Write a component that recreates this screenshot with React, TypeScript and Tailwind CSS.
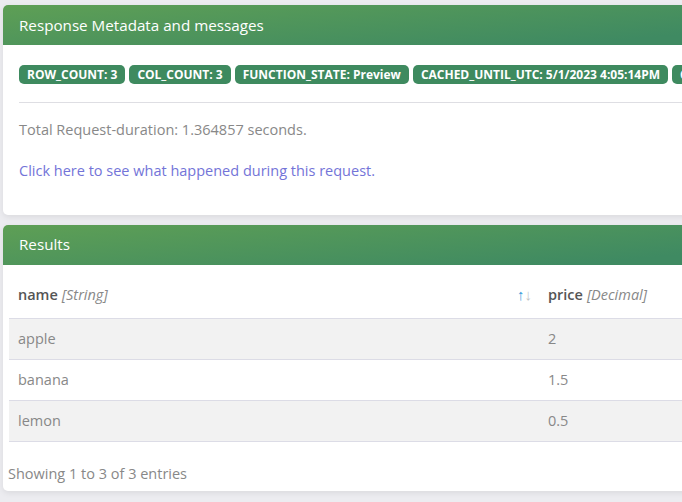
import { ReactNode } from "react";

const badges = [
    "ROW_COUNT: 3",
    "COL_COUNT: 3",
    "FUNCTION_STATE: Preview",
    "CACHED_UNTIL_UTC: 5/1/2023 4:05:14PM",
    "CACHE_HIT: False",
];

const rows = [
    { name: "apple", price: "2" },
    { name: "banana", price: "1.5" },
    { name: "lemon", price: "0.5" },
];

function CardHeader({ children }: { children: ReactNode }) {
    return (
        <div className="h-10 flex items-center px-4 text-[15.2px] text-white rounded-tl-[5px] bg-[linear-gradient(175deg,#5e9f55_0%,#3f8a62_75%)]">
            {children}
        </div>
    );
}

export default function App() {
    return (
        <div className="w-[682px] h-[502px] overflow-hidden bg-[#ececf0] pt-[5px] pl-[3px] font-['Open_Sans',sans-serif]">
            <div className="w-[900px] bg-white rounded-[5px] shadow-[0_2px_6px_rgba(0,0,0,0.08)]">
                <CardHeader>Response Metadata and messages</CardHeader>
                <div className="px-4 pt-5 pb-[33px]">
                    <div className="flex flex-row gap-1">
                        {badges.map((b) => (
                            <span key={b} className="h-[19px] flex items-center px-2 rounded-[5px] bg-[#3e8a5f] text-white text-[12px] font-bold whitespace-nowrap">
                                {b}
                            </span>
                        ))}
                    </div>
                    <div className="mt-[18px] border-t border-[#dedee3]" />
                    <div className="mt-[16px] text-[14.5px] text-[#888888]">
                        Total Request-duration: 1.364857 seconds.
                    </div>
                    <div className="mt-[19px] text-[14.5px] text-[#7374d8]">
                        Click here to see what happened during this request.
                    </div>
                </div>
            </div>

            <div className="mt-[10px] w-[900px] bg-white rounded-[5px] shadow-[0_2px_6px_rgba(0,0,0,0.08)]">
                <CardHeader>Results</CardHeader>
                <div className="px-[6px] pb-[7px]">
                    <div className="grid grid-cols-[539px_1fr] h-[54px] items-end pb-[12px] border-b border-[#dcdce6] text-[14.5px]">
                        <div className="flex flex-row items-center pl-[9px] pr-[16px]">
                            <span className="font-semibold text-[#555555]">name</span>
                            <span className="ml-1 italic text-[#888888]">[String]</span>
                            <span className="ml-auto flex flex-row text-[15px] leading-none">
                                <span className="text-[#3a9ad9]">↑</span>
                                <span className="text-[#c4c4c4]">↓</span>
                            </span>
                        </div>
                        <div className="flex flex-row items-center">
                            <span className="font-semibold text-[#555555]">price</span>
                            <span className="ml-1 italic text-[#888888]">[Decimal]</span>
                        </div>
                    </div>
                    {rows.map((r, i) => (
                        <div key={r.name} className={`grid grid-cols-[539px_1fr] h-[41px] items-center border-b border-[#dcdce6] text-[14.5px] text-[#888888] ${i % 2 === 0 ? "bg-[#f2f2f2]" : "bg-white"}`}>
                            <div className="pl-[9px]">{r.name}</div>
                            <div>{r.price}</div>
                        </div>
                    ))}
                    <div className="mt-[21px] text-[14.5px] text-[#888888] -ml-[1px]">
                        Showing 1 to 3 of 3 entries
                    </div>
                </div>
            </div>
        </div>
    );
}
